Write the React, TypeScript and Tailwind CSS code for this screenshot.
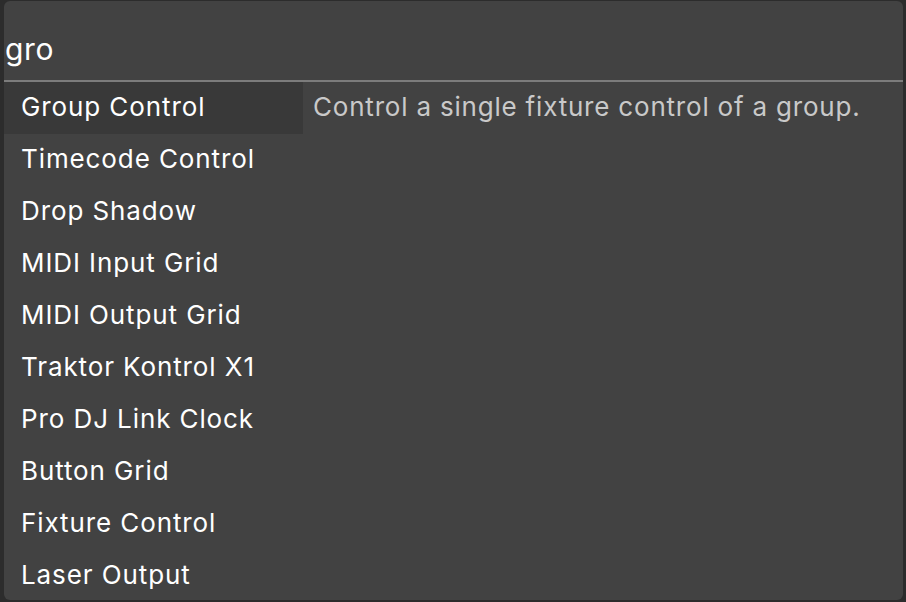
const items = [
  'Group Control',
  'Timecode Control',
  'Drop Shadow',
  'MIDI Input Grid',
  'MIDI Output Grid',
  'Traktor Kontrol X1',
  'Pro DJ Link Clock',
  'Button Grid',
  'Fixture Control',
  'Laser Output',
];

export default function App() {
  return (
    <div
      className="h-[602px] w-[906px] overflow-hidden bg-[#2c2c2c] pl-[4px] pr-[3px] pt-[1px] pb-[2px]"
      style={{ fontFamily: 'Inter, "Noto Sans", sans-serif' }}
    >
      <div className="flex h-full flex-col overflow-hidden rounded-[6px] bg-[#424242]">
        <div className="flex h-[81px] shrink-0 items-end border-b-2 border-[#7c7c7c] pb-[16px]">
          <span className="ml-[1px] text-[30px] leading-none tracking-[0.6px] text-white">gro</span>
        </div>
        <div className="flex flex-1">
          <ul className="w-[299px]">
            {items.map((item, i) => (
              <li
                key={item}
                className={
                  i === 0
                    ? 'flex h-[52px] items-center bg-[#393939] pb-[3px] pl-[17px] text-[26px] tracking-[0.9px] text-white'
                    : 'flex h-[52px] items-center pb-[3px] pl-[17px] text-[26px] tracking-[0.9px] text-white'
                }
              >
                {item}
              </li>
            ))}
          </ul>
          <div className="flex h-[52px] items-center pb-[3px] pl-[10px] text-[26px] tracking-[0.8px] text-[#c9c9c9]">
            Control a single fixture control of a group.
          </div>
        </div>
      </div>
    </div>
  );
}
